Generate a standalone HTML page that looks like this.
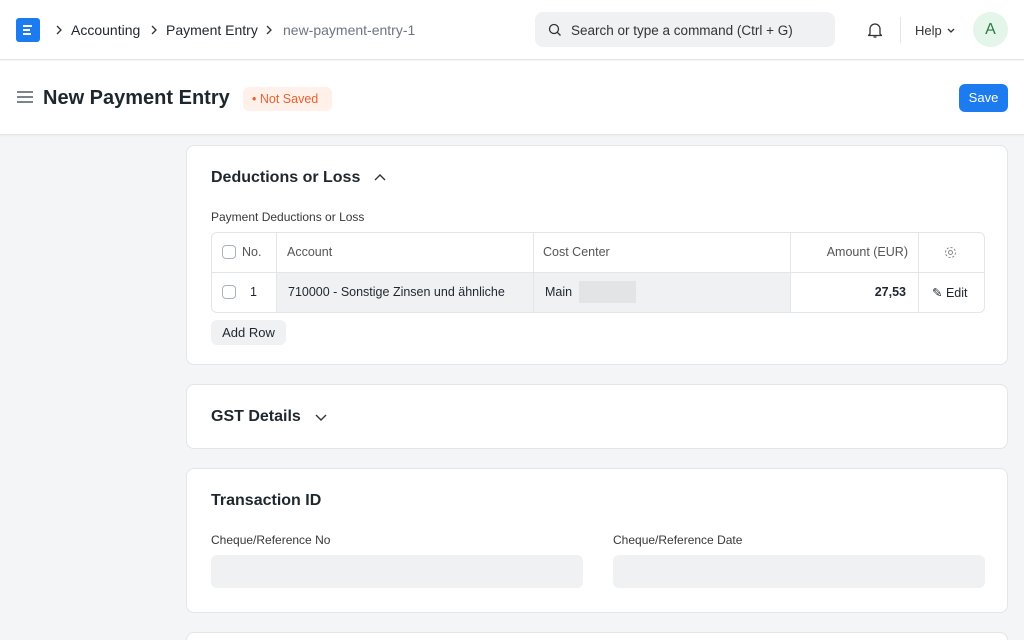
<!DOCTYPE html>
<html><head><meta charset="utf-8"><style>
*{box-sizing:border-box;margin:0;padding:0}
html,body{width:1024px;height:640px;overflow:hidden}
body{background:#f4f5f6;font-family:"Liberation Sans",sans-serif;color:#1f272e;position:relative}
.nav{position:absolute;left:0;top:0;width:1024px;height:60px;background:#fff;border-bottom:1px solid #e2e6e9}
.hdr{position:absolute;left:0;top:61px;width:1024px;height:74px;background:#fff;border-bottom:1px solid #e2e6e9;box-shadow:0 1px 2px rgba(0,0,0,.04)}
.abs{position:absolute}
.card{position:absolute;left:186px;width:822px;background:#fff;border:1px solid #e2e6e9;border-radius:8px}
.t{font-size:16px;font-weight:bold;color:#1f272e}
.lbl{font-size:12px;color:#383838}
.inp{position:absolute;height:33px;background:#f0f1f3;border-radius:6px}
.cb{position:absolute;width:14px;height:14px;border:1px solid #aab2b9;border-radius:4px;background:#fff}
.th{position:absolute;top:12px;font-size:12.5px;color:#555}
</style></head><body>
<div class="nav">
 <div class="abs" style="left:16px;top:18px;width:24px;height:24px;background:#1d7bf0;border-radius:3px"></div>
 <svg class="abs" style="left:16px;top:18px" width="24" height="24" viewBox="0 0 24 24"><path d="M7 8h9M7 12h7M7 16h8" stroke="#fff" stroke-width="2" fill="none"/></svg>
 <svg class="abs" style="left:55px;top:25px" width="8" height="10" viewBox="0 0 8 10"><path d="M2 1l4 4-4 4" stroke="#333" stroke-width="1.3" fill="none"/></svg>
 <div class="abs" style="left:71px;top:22px;font-size:14px;color:#1f272e">Accounting</div>
 <svg class="abs" style="left:150px;top:25px" width="8" height="10" viewBox="0 0 8 10"><path d="M2 1l4 4-4 4" stroke="#333" stroke-width="1.3" fill="none"/></svg>
 <div class="abs" style="left:166px;top:22px;font-size:14px;color:#1f272e">Payment Entry</div>
 <svg class="abs" style="left:265px;top:25px" width="8" height="10" viewBox="0 0 8 10"><path d="M2 1l4 4-4 4" stroke="#333" stroke-width="1.3" fill="none"/></svg>
 <div class="abs" style="left:283px;top:22px;font-size:14px;color:#6c7680">new-payment-entry-1</div>
 <div class="abs" style="left:535px;top:12px;width:300px;height:35px;background:#f0f1f3;border-radius:8px"></div>
 <svg class="abs" style="left:548px;top:23px" width="14" height="14" viewBox="0 0 14 14"><circle cx="6" cy="6" r="4.5" fill="none" stroke="#333" stroke-width="1.3"/><line x1="9.3" y1="9.3" x2="12.5" y2="12.5" stroke="#333" stroke-width="1.3"/></svg>
 <div class="abs" style="left:571px;top:23px;font-size:13.5px;color:#333">Search or type a command (Ctrl + G)</div>
 <svg class="abs" style="left:866px;top:21px" width="18" height="18" viewBox="0 0 18 18"><path d="M4 13V8a5 5 0 0 1 10 0v5l1.5 1.5h-13z" fill="none" stroke="#333" stroke-width="1.3" stroke-linejoin="round"/><path d="M7.5 16h3" stroke="#333" stroke-width="1.3"/></svg>
 <div class="abs" style="left:900px;top:17px;width:1px;height:26px;background:#e2e6e9"></div>
 <div class="abs" style="left:915px;top:23px;font-size:13px;color:#333">Help</div>
 <svg class="abs" style="left:946px;top:27px" width="10" height="8" viewBox="0 0 10 8"><path d="M2 2l3 3 3-3" stroke="#333" stroke-width="1.3" fill="none"/></svg>
 <div class="abs" style="left:973px;top:12px;width:35px;height:35px;border-radius:50%;background:#e4f5e9;color:#2a7a45;font-size:16px;text-align:center;line-height:35px">A</div>
</div>
<div class="hdr">
 <div class="abs" style="left:17px;top:30px;width:16px;height:2px;background:#7c858e;box-shadow:0 5px 0 #7c858e,0 10px 0 #7c858e"></div>
 <div class="abs" style="left:43px;top:26px;font-size:20px;font-weight:bold">New Payment Entry</div>
 <div class="abs" style="left:243px;top:26px;width:89px;height:24px;background:#fff1ea;border-radius:6px;color:#e8622e;font-size:12.5px;line-height:24px;padding-left:9px">• Not Saved</div>
 <div class="abs" style="left:959px;top:23px;width:49px;height:28px;background:#1d7bf0;border-radius:6px;color:#fff;font-size:13px;text-align:center;line-height:28px">Save</div>
</div>
<div class="card" style="top:145px;height:220px">
 <div class="abs t" style="left:24px;top:23px">Deductions or Loss</div>
 <svg class="abs" style="left:186px;top:27px" width="14" height="10" viewBox="0 0 14 10"><path d="M2 7l5-5 5 5" stroke="#333" stroke-width="1.4" fill="none"/></svg>
 <div class="abs lbl" style="left:24px;top:64px">Payment Deductions or Loss</div>
 <div class="abs" style="left:24px;top:86px;width:774px;height:81px;border:1px solid #e2e6e9;border-radius:6px;overflow:hidden">
  <div class="abs" style="left:0;top:39px;width:774px;height:1px;background:#e2e6e9"></div>
  <div class="abs" style="left:64px;top:40px;width:514px;height:40px;background:#f0f1f3"></div>
  <div class="abs" style="left:64px;top:0;width:1px;height:80px;background:#e2e6e9"></div>
  <div class="abs" style="left:321px;top:0;width:1px;height:80px;background:#e2e6e9"></div>
  <div class="abs" style="left:578px;top:0;width:1px;height:80px;background:#e2e6e9"></div>
  <div class="abs" style="left:706px;top:0;width:1px;height:80px;background:#e2e6e9"></div>
  <div class="cb" style="left:10px;top:12px"></div>
  <div class="th" style="left:30px">No.</div>
  <div class="th" style="left:75px">Account</div>
  <div class="th" style="left:331px">Cost Center</div>
  <div class="th" style="left:578px;width:118px;text-align:right">Amount (EUR)</div>
  <svg class="abs" style="left:732px;top:13px" width="13" height="13" viewBox="0 0 13 13"><circle cx="6.5" cy="6.5" r="2" fill="none" stroke="#888" stroke-width="1"/><circle cx="6.5" cy="6.5" r="5" fill="none" stroke="#888" stroke-width="1" stroke-dasharray="2.2 1.7"/></svg>
  <div class="cb" style="left:10px;top:52px"></div>
  <div class="abs" style="left:38px;top:52px;font-size:12.5px">1</div>
  <div class="abs" style="left:76px;top:52px;font-size:12.5px;width:232px;white-space:nowrap;overflow:hidden">710000 - Sonstige Zinsen und ähnliche</div>
  <div class="abs" style="left:333px;top:52px;font-size:12.5px">Main</div>
  <div class="abs" style="left:367px;top:48px;width:57px;height:22px;background:#e2e4e6"></div>
  <div class="abs" style="left:578px;width:116px;text-align:right;top:52px;font-size:12.5px;font-weight:bold">27,53</div>
  <div class="abs" style="left:720px;top:52px;font-size:12.5px">✎ Edit</div>
 </div>
 <div class="abs" style="left:24px;top:174px;width:75px;height:25px;background:#f0f1f3;border-radius:6px;font-size:13px;text-align:center;line-height:25px">Add Row</div>
</div>
<div class="card" style="top:384px;height:65px">
 <div class="abs t" style="left:24px;top:23px">GST Details</div>
 <svg class="abs" style="left:127px;top:27px" width="14" height="10" viewBox="0 0 14 10"><path d="M2 3l5 5 5-5" stroke="#333" stroke-width="1.4" fill="none"/></svg>
</div>
<div class="card" style="top:468px;height:145px">
 <div class="abs t" style="left:24px;top:23px">Transaction ID</div>
 <div class="abs lbl" style="left:24px;top:64px">Cheque/Reference No</div>
 <div class="abs lbl" style="left:426px;top:64px">Cheque/Reference Date</div>
 <div class="inp" style="left:24px;top:86px;width:372px"></div>
 <div class="inp" style="left:426px;top:86px;width:372px"></div>
</div>
<div class="card" style="top:632px;height:40px"></div>
</body></html>
